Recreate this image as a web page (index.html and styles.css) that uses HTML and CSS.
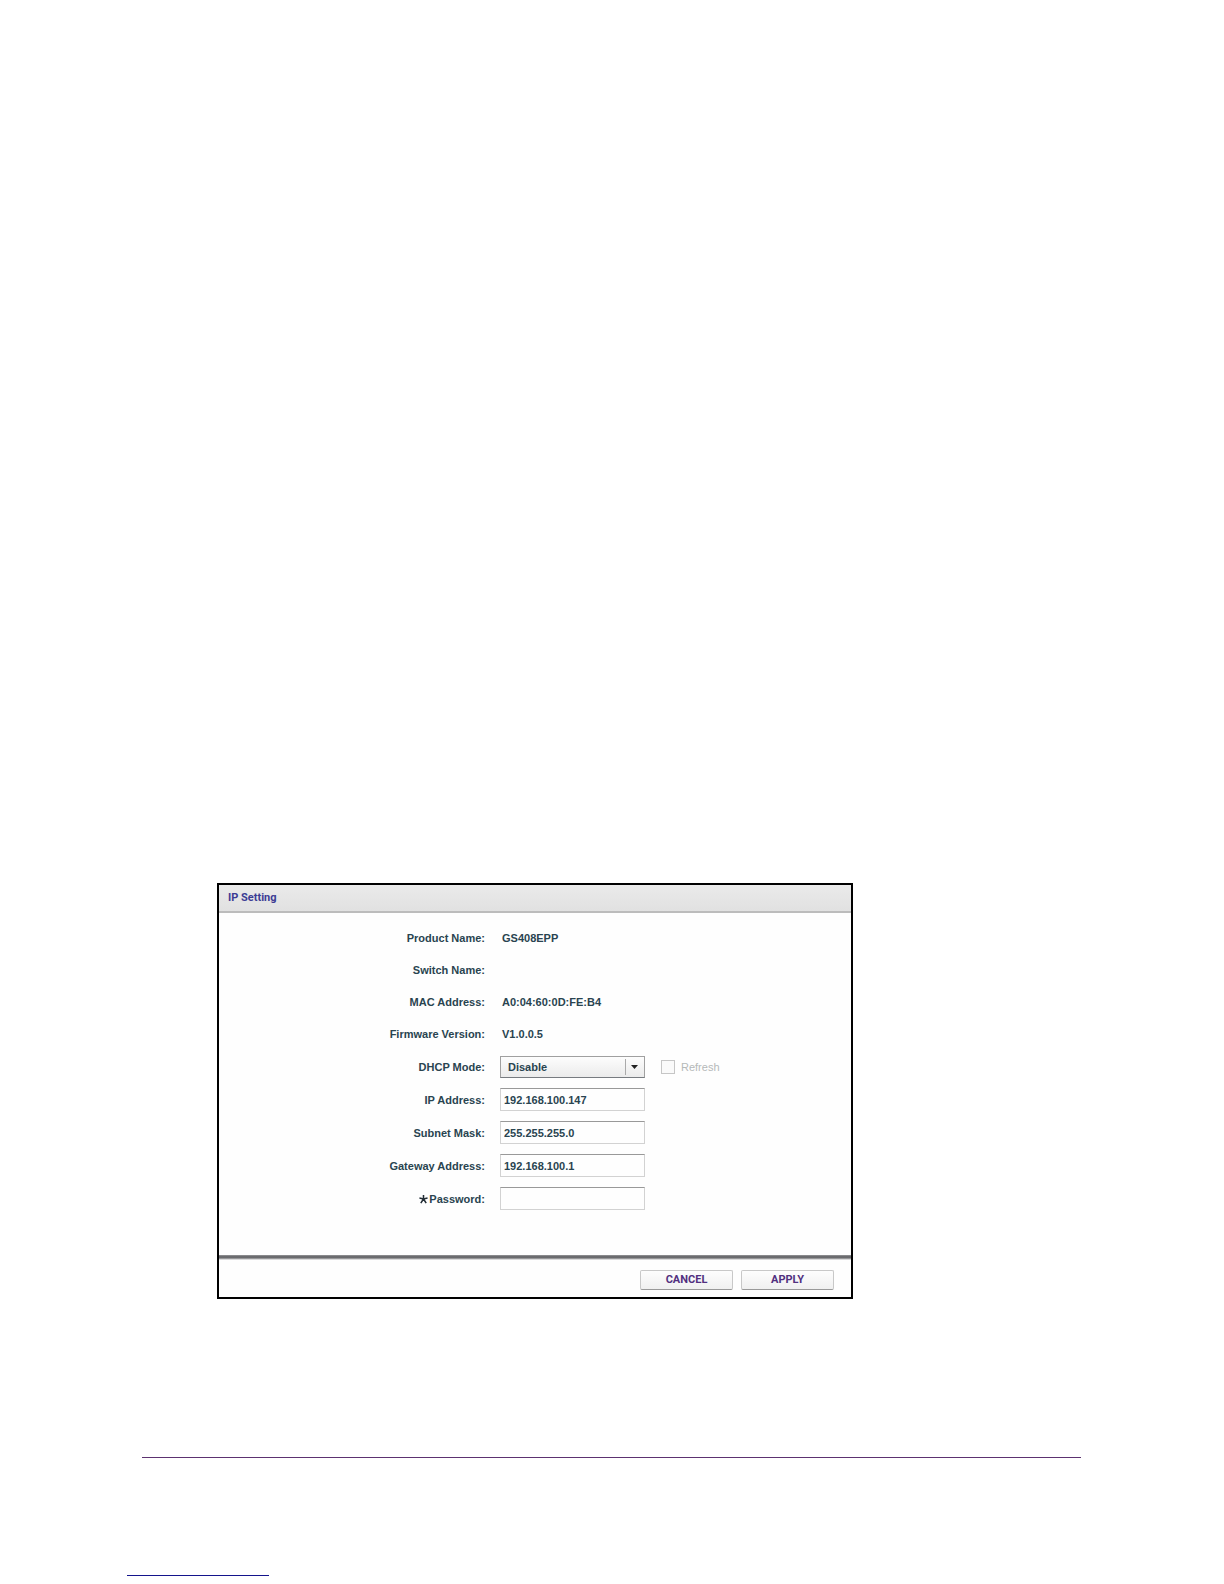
FILE: index.html
```html
<!DOCTYPE html>
<html lang="en">
<head>
<meta charset="utf-8">
<meta name="viewport" content="width=device-width, initial-scale=1">
<title>IP Setting</title>
<link rel="stylesheet" href="styles.css">
</head>
<body>
<main class="page">
  <form class="dialog">
    <h1 class="dialog-title">IP Setting</h1>
    <div class="dialog-body">
      <dl class="info">
        <div class="row"><dt class="label">Product Name:</dt><dd class="value">GS408EPP</dd></div>
        <div class="row"><dt class="label">Switch Name:</dt><dd class="value"></dd></div>
        <div class="row"><dt class="label">MAC Address:</dt><dd class="value">A0:04:60:0D:FE:B4</dd></div>
        <div class="row"><dt class="label">Firmware Version:</dt><dd class="value">V1.0.0.5</dd></div>
      </dl>
      <div class="row row-field">
        <label class="label" for="dhcp">DHCP Mode:</label>
        <div class="controls">
          <div class="select-box">
            <select class="select" id="dhcp"><option>Disable</option><option>Enable</option></select>
            <svg class="select-arrow" viewBox="0 0 20 16" aria-hidden="true"><path d="M0.5 0V16" stroke="#aaa"/><path d="M6 6h7L9.500 10z" fill="#222"/></svg>
          </div>
          <label class="refresh"><input class="checkbox" type="checkbox" disabled>Refresh</label>
        </div>
      </div>
      <div class="row row-field">
        <label class="label" for="ip">IP Address:</label>
        <input class="input" id="ip" type="text" value="192.168.100.147">
      </div>
      <div class="row row-field">
        <label class="label" for="mask">Subnet Mask:</label>
        <input class="input" id="mask" type="text" value="255.255.255.0">
      </div>
      <div class="row row-field">
        <label class="label" for="gateway">Gateway Address:</label>
        <input class="input" id="gateway" type="text" value="192.168.100.1">
      </div>
      <div class="row row-field">
        <label class="label" for="password"><svg class="star" viewBox="0 0 10 10" aria-hidden="true"><path d="M5 5V0.500M5 5L0.500 4M5 5L9.500 4M5 5L2 9.500M5 5L8 9.500" stroke="currentColor" stroke-width="1.700"/></svg>Password:</label>
        <input class="input" id="password" type="password">
      </div>
    </div>
    <div class="actions">
      <button class="button" type="button">CANCEL</button>
      <button class="button" type="submit">APPLY</button>
    </div>
  </form>
  <hr class="footer-rule">
  <hr class="link-rule">
</main>
</body>
</html>
```
FILE: styles.css
```css
* {
  box-sizing: border-box;
}

body {
  margin: 0;
  background: #fff;
  color: #294450;
  font: 700 11px/16px "Liberation Sans", Arial, sans-serif;
}

.page {
  display: flex;
  flex-direction: column;
  justify-content: flex-end;
  min-height: 100vh;
  padding: 0 143px 8px 127px;
}

.dialog {
  width: 100%;
  max-width: 636px;
  margin-left: 90px;
  border: 2px solid #000;
  background: #fefefe;
}

.dialog-title {
  margin: 0;
  padding: 5px 9px;
  height: 28px;
  border-bottom: 2px solid #bcbcbc;
  background: linear-gradient(#eaeaea, #e1e1e1);
  color: #3c3c94;
  font: 700 11px/16px Roboto, sans-serif;
}

.dialog-body {
  padding: 9px 0 40px;
}

.info {
  margin: 0;
}

.row {
  display: grid;
  grid-template-columns: minmax(0, 266px) 1fr;
  column-gap: 15px;
  height: 32px;
  align-items: center;
}

.row-field {
  height: 33px;
}

.label {
  text-align: right;
}

.value {
  margin: 0;
  padding-left: 2px;
}

.controls {
  display: flex;
  align-items: center;
  gap: 16px;
}

.select-box {
  position: relative;
  width: 145px;
}

.select {
  display: block;
  width: 100%;
  height: 22px;
  padding: 0 7px;
  border: 1px solid #a0a0a0;
  border-bottom-color: #777b80;
  border-radius: 0;
  background: linear-gradient(#fdfdfd, #ebebeb);
  color: inherit;
  font: inherit;
  appearance: none;
}

.select-arrow {
  position: absolute;
  top: 3px;
  right: 0;
  width: 20px;
  height: 16px;
  pointer-events: none;
}

.refresh {
  display: flex;
  align-items: center;
  gap: 6px;
  color: #b5b9b9;
  font-weight: 400;
}

.checkbox {
  width: 14px;
  height: 14px;
  margin: 0;
  border: 1px solid #c6c6c6;
  background: #fafafa;
  appearance: none;
}

.input {
  width: 145px;
  height: 23px;
  padding: 0 3px;
  border: 1px solid #d2d2d2;
  border-top-color: #999;
  background: #fefefe;
  color: inherit;
  font: inherit;
}

.star {
  width: 9px;
  height: 10px;
  margin-right: 1px;
  vertical-align: -1px;
  color: #222d35;
}

.actions {
  display: flex;
  justify-content: flex-end;
  gap: 8px;
  padding: 15px 17px 7px;
  background: linear-gradient(#97979a, #5c5d60 2px, #77787b 3px, #b4b4b6 4px, #fefefe 5px);
}

.button {
  width: 93px;
  height: 20px;
  padding: 0;
  border: 1px solid #c8c8c8;
  border-bottom-color: #999;
  border-radius: 2px;
  background: linear-gradient(#fdfdfd, #f0f0f0);
  color: #523080;
  font: 700 11px/16px Roboto, sans-serif;
}

.footer-rule {
  width: auto;
  height: 1px;
  margin: 158px 0 0 15px;
  border: 0;
  background: #5c3270;
}

.link-rule {
  width: 142px;
  height: 1px;
  margin: 117px 0 0;
  border: 0;
  background: #14148c;
}
```
